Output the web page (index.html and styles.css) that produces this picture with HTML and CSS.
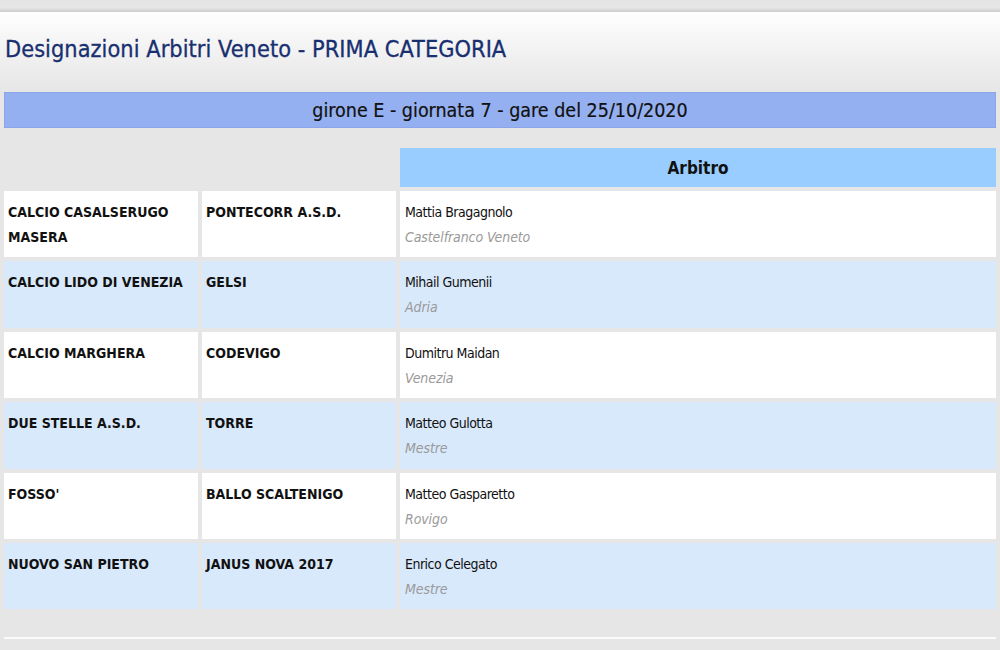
FILE: index.html
```html
<!DOCTYPE html>
<html lang="it">
<head>
<meta charset="utf-8">
<title>Designazioni Arbitri Veneto</title>
<link rel="stylesheet" href="styles.css">
</head>
<body>
<div class="topbar"></div>
<div class="page">
  <h1 class="title">Designazioni Arbitri Veneto - PRIMA CATEGORIA</h1>
  <div class="banner">girone E - giornata 7 - gare del 25/10/2020</div>
  <table class="grid">
    <colgroup>
      <col class="c-team">
      <col class="c-team">
      <col class="c-ref">
    </colgroup>
    <thead>
      <tr>
        <th class="empty"></th>
        <th class="empty"></th>
        <th class="head">Arbitro</th>
      </tr>
    </thead>
    <tbody>
      <tr class="odd">
        <td class="team">CALCIO CASALSERUGO MASERA</td>
        <td class="team">PONTECORR A.S.D.</td>
        <td class="ref"><div class="name">Mattia Bragagnolo</div><div class="city">Castelfranco Veneto</div></td>
      </tr>
      <tr class="even">
        <td class="team">CALCIO LIDO DI VENEZIA</td>
        <td class="team">GELSI</td>
        <td class="ref"><div class="name">Mihail Gumenii</div><div class="city">Adria</div></td>
      </tr>
      <tr class="odd">
        <td class="team">CALCIO MARGHERA</td>
        <td class="team">CODEVIGO</td>
        <td class="ref"><div class="name">Dumitru Maidan</div><div class="city">Venezia</div></td>
      </tr>
      <tr class="even">
        <td class="team">DUE STELLE A.S.D.</td>
        <td class="team">TORRE</td>
        <td class="ref"><div class="name">Matteo Gulotta</div><div class="city">Mestre</div></td>
      </tr>
      <tr class="odd">
        <td class="team">FOSSO'</td>
        <td class="team">BALLO SCALTENIGO</td>
        <td class="ref"><div class="name">Matteo Gasparetto</div><div class="city">Rovigo</div></td>
      </tr>
      <tr class="even">
        <td class="team">NUOVO SAN PIETRO</td>
        <td class="team">JANUS NOVA 2017</td>
        <td class="ref"><div class="name">Enrico Celegato</div><div class="city">Mestre</div></td>
      </tr>
    </tbody>
  </table>
  <div class="rule"></div>
</div>
</body>
</html>
```

FILE: styles.css
```css
html, body {
  margin: 0;
  padding: 0;
  background: #e6e6e6;
  font-family: "DejaVu Sans Condensed", "DejaVu Sans", sans-serif;
  color: #111;
}

.topbar {
  height: 12px;
  background: linear-gradient(#e4e4e4, #e6e6e6 65%, #cccccc);
}

.page {
  background: linear-gradient(#ffffff 0px, #f6f6f6 25px, #e6e6e6 80px);
  padding-top: 22px;
  min-height: 616px;
  box-sizing: border-box;
}

.title {
  margin: 0 0 0 5px;
  font-size: 23.3px;
  line-height: 30px;
  font-weight: normal;
  color: #182f70;
  letter-spacing: 0.05px;
  -webkit-text-stroke: 0.3px #182f70;
}

.banner {
  margin: 28px 4px 0 4px;
  height: 36px;
  box-sizing: border-box;
  border: 1px solid #8aa5ea;
  background: #95b0f0;
  text-align: center;
  font-size: 19.5px;
  line-height: 35px;
  color: #111;
  -webkit-text-stroke: 0.2px #111;
}

.grid {
  width: 1000px;
  border-spacing: 4px;
  border-collapse: separate;
  margin-top: 16px;
  table-layout: fixed;
}

.c-team { width: 194px; }
.c-ref { width: auto; }

.grid th, .grid td {
  padding: 0;
}

.empty {
  background: transparent;
}

.head {
  height: 39px;
  background: #99ccff;
  font-size: 17px;
  font-weight: bold;
  text-align: center;
  vertical-align: middle;
  color: #111;
}

.grid td {
  height: 66.4px;
  box-sizing: border-box;
  vertical-align: top;
  padding: 9px 4px 0 4px;
  font-size: 14px;
  line-height: 25px;
}

.odd td { background: #ffffff; }
.even td { background: #d8e9fb; }

.team {
  font-weight: bold;
}

.ref {
  padding-left: 5px !important;
}

.name {
  color: #111;
  letter-spacing: -0.5px;
}

.city {
  color: #9a9a9a;
  font-style: italic;
  letter-spacing: -0.1px;
}

.rule {
  margin: 24px 4px 0 4px;
  height: 2px;
  background: #fafafa;
}
```
